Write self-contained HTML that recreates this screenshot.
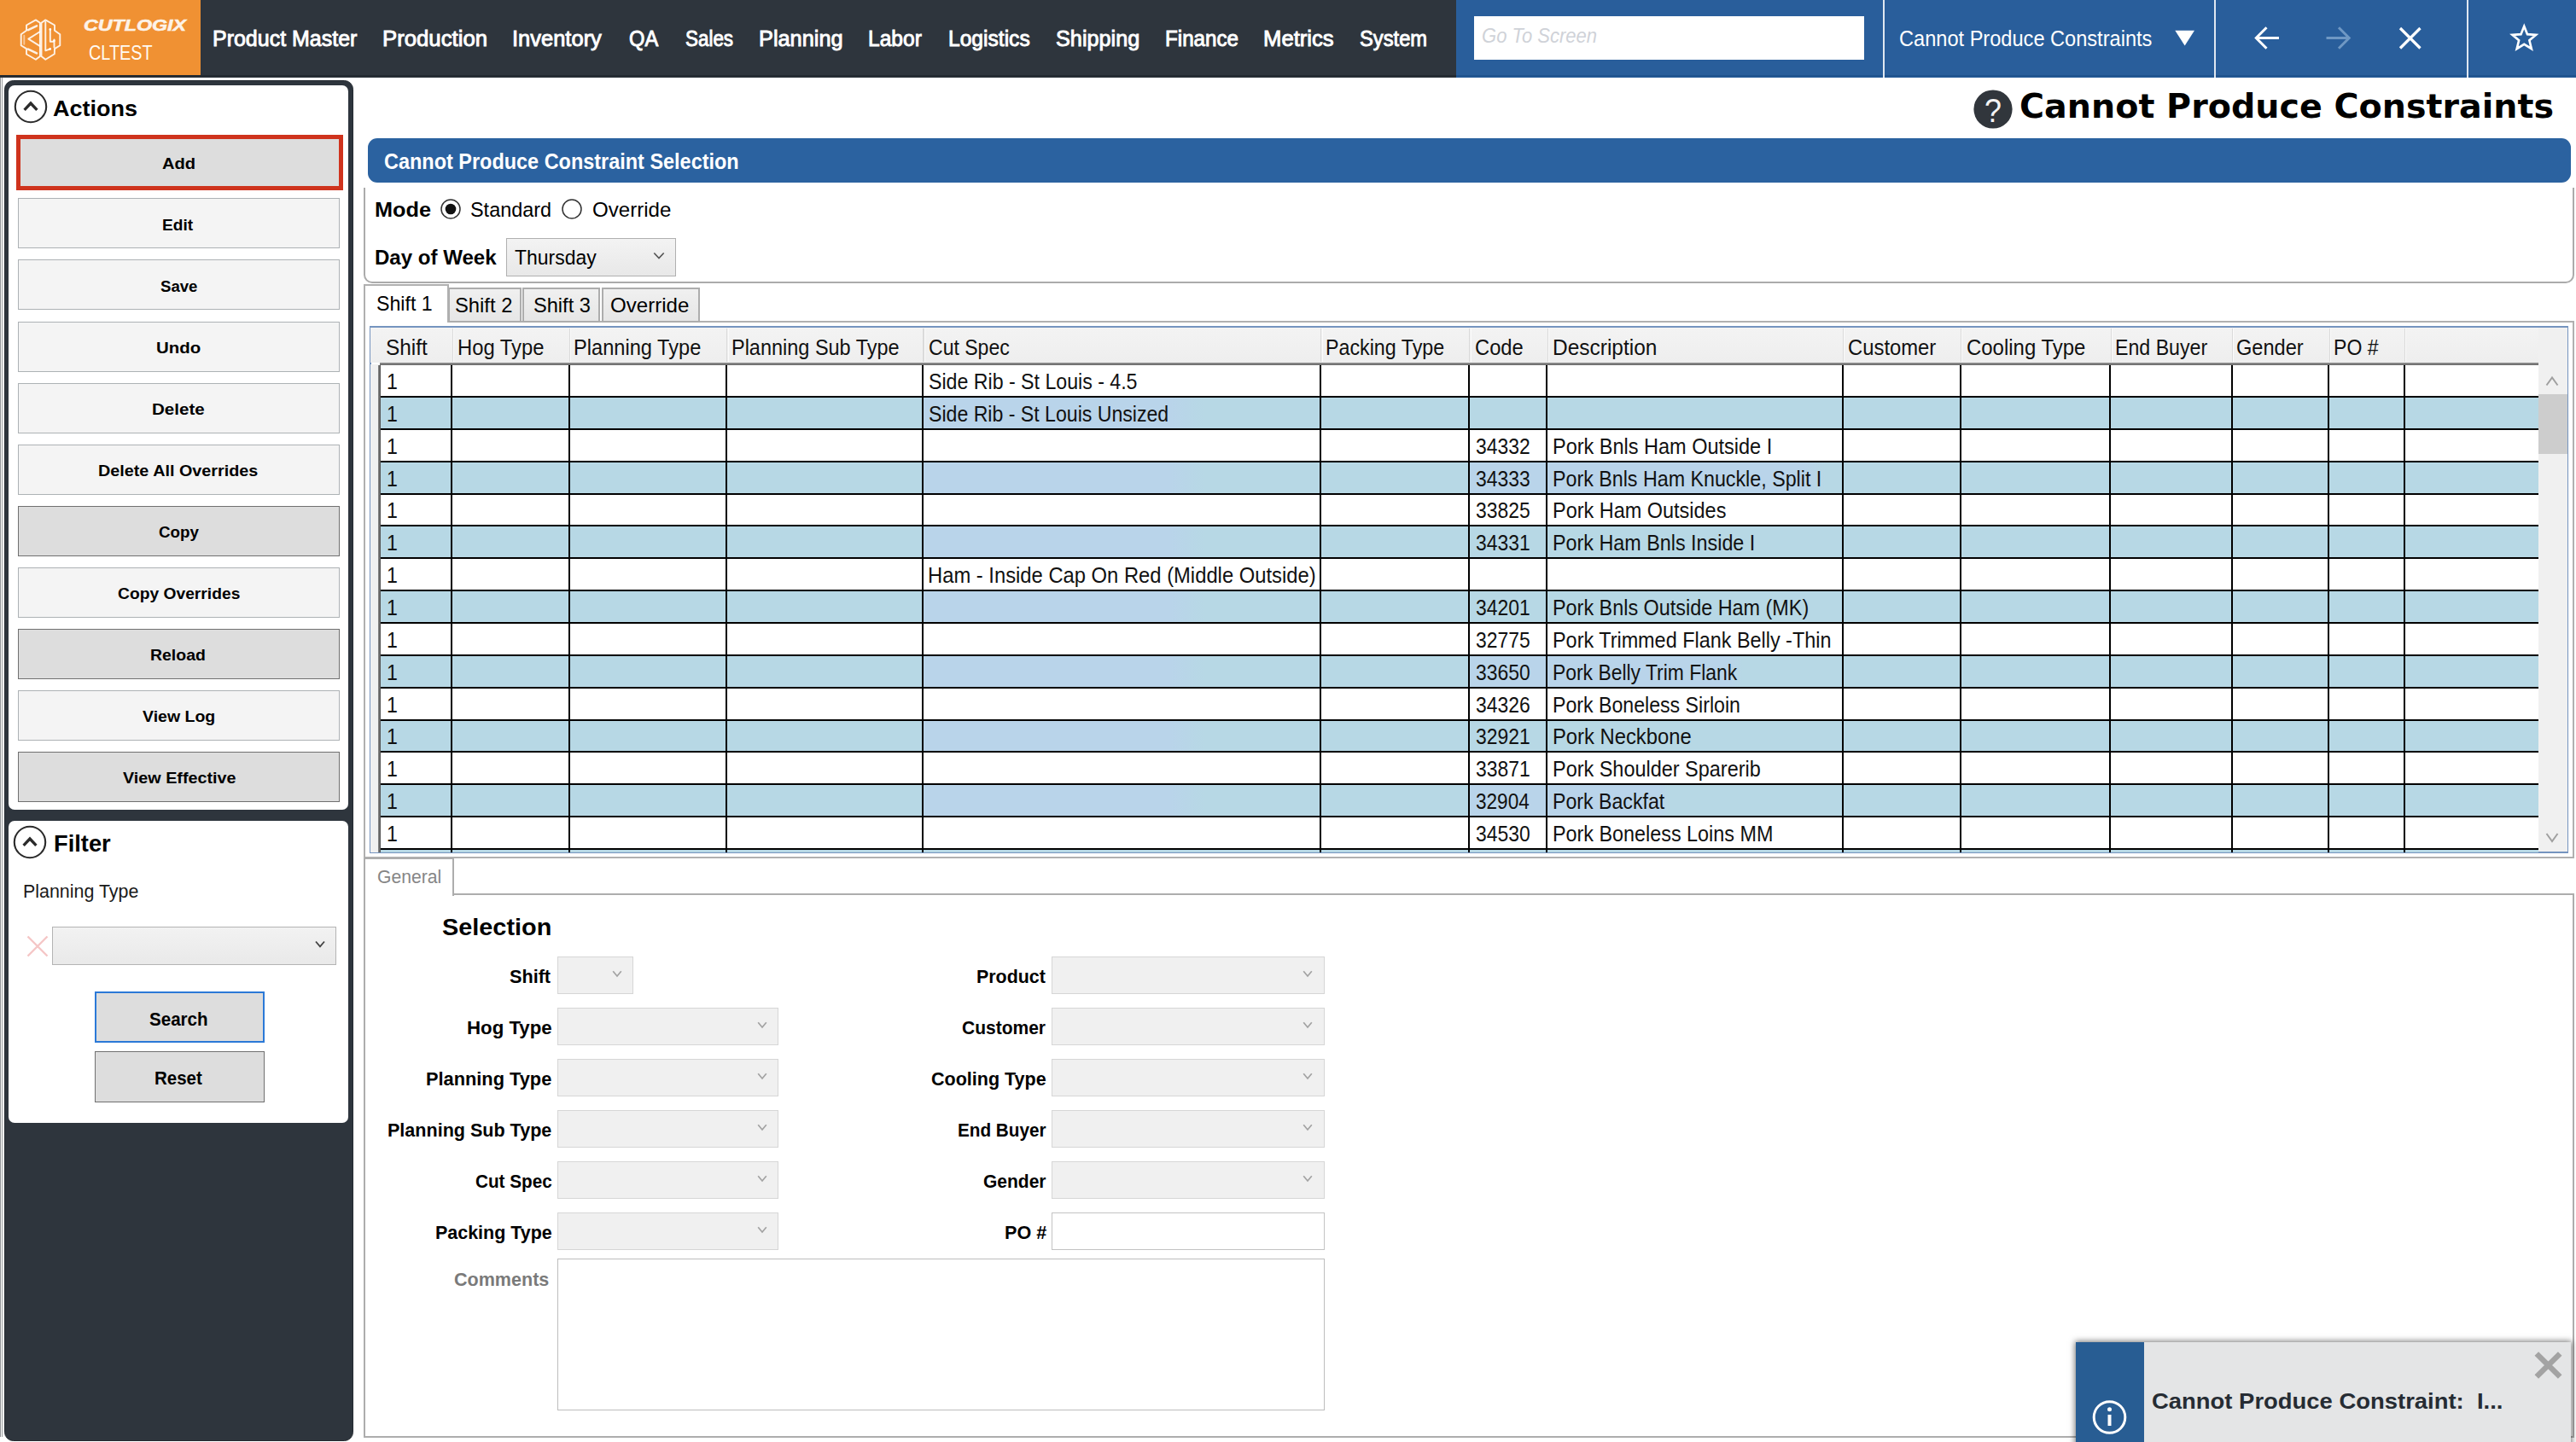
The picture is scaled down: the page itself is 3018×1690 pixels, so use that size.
<!DOCTYPE html>
<html lang="en"><head><meta charset="utf-8"><title>Cannot Produce Constraints</title>
<style>
html,body{margin:0;padding:0;background:#fff;width:3018px;height:1690px;overflow:hidden}
.app{left:0;top:0;width:3018px;height:1690px;overflow:hidden;background:#fff}
body{width:3018px;height:1690px;position:relative;overflow:hidden;font-family:'Liberation Sans',sans-serif}
div,.a,header,aside,main,section,footer{position:absolute;margin:0;padding:0}
header,aside,main,section,footer{left:0;top:0}
.t{position:absolute;white-space:nowrap;transform-origin:0 0;display:block}
</style></head>
<body>
<div class="app">
<header>
<div style="left:0px;top:0px;width:3018px;height:90.5px;background:#2e353d"></div>
<div style="left:0px;top:0px;width:234.8px;height:88.3px;background:#f09133"></div>
<div style="left:1706px;top:0px;width:1312px;height:90.5px;background:#295e9b"></div>
<div style="left:0px;top:88.2px;width:1706px;height:2.3px;background:#222930"></div>
<div style="left:1706px;top:88.2px;width:1312px;height:2.3px;background:#1f538e"></div>
<div style="left:2205.5px;top:0px;width:2px;height:90.5px;background:#dfe7f1"></div>
<div style="left:2594px;top:0px;width:2px;height:90.5px;background:#dfe7f1"></div>
<div style="left:2889.7px;top:0px;width:2px;height:90.5px;background:#dfe7f1"></div>
<svg class="a" style="left:0;top:0" width="100" height="88" viewBox="0 0 100 88" fill="none" stroke="#fff" stroke-opacity=".88" stroke-width="1.900" stroke-linejoin="round" stroke-linecap="round">
<path d="M46.900 26.800 L41.900 23.400 L31 29.500 L31 35.800 L24.700 40.200 L24.700 53.300 L31 57.100 L31 63.500 L41.900 69.800 L46.900 65.900 Z"/>
<path d="M48.500 26.800 L53.300 23.400 L64 29.500 L64 35.800 L70.300 40.200 L70.300 53.300 L64 57.100 L63.800 63.200 L53.300 69.800 L48.500 65.900 Z"/>
<path d="M43 30.400 L33 35.200" stroke-width="2.600"/>
<path d="M33 57.600 L43 62.400" stroke-width="2.600"/>
<path d="M46.600 37.300 L33.300 45.600 L46.600 53.900" stroke-width="1.900"/>
<path d="M28.300 41.800 L28.300 51.800" stroke-opacity=".5"/>
<path d="M53.300 25.800 V59.300 L58.500 57.500" stroke-width="1.900"/>
<path d="M58.800 34.600 V48.700 H63.200 M63.500 46.500 V55.500"/>
<circle cx="58.800" cy="34.400" r="1.300" fill="#fff" stroke="none"/><circle cx="58.700" cy="57.400" r="1.300" fill="#fff" stroke="none"/><circle cx="63.400" cy="47.800" r="1.300" fill="#fff" stroke="none"/>
</svg>
<span class="t" style="left:98.40px;top:20px;font:italic 700 17.7px/20px 'Liberation Sans',sans-serif;color:#fdf3e8;transform:scaleX(1.3134);-webkit-text-stroke:.55px #fdf3e8;">CUTLOGIX</span>
<span class="t" style="left:104.20px;top:48px;font:400 24.7px/27px 'Liberation Sans',sans-serif;color:#fffaf2;transform:scaleX(0.8045);">CLTEST</span>
<span class="t" style="left:248.51px;top:31px;font:400 25.1px/28px 'Liberation Sans',sans-serif;color:#fff;transform:scaleX(0.9953);-webkit-text-stroke:.9px #fff;">Product Master</span>
<span class="t" style="left:447.65px;top:31px;font:400 25.1px/28px 'Liberation Sans',sans-serif;color:#fff;transform:scaleX(1.0255);-webkit-text-stroke:.9px #fff;">Production</span>
<span class="t" style="left:600.47px;top:31px;font:400 25.1px/28px 'Liberation Sans',sans-serif;color:#fff;transform:scaleX(1.0160);-webkit-text-stroke:.9px #fff;">Inventory</span>
<span class="t" style="left:737.26px;top:31px;font:400 25.1px/28px 'Liberation Sans',sans-serif;color:#fff;transform:scaleX(0.9432);-webkit-text-stroke:.9px #fff;">QA</span>
<span class="t" style="left:803.11px;top:31px;font:400 25.1px/28px 'Liberation Sans',sans-serif;color:#fff;transform:scaleX(0.8934);-webkit-text-stroke:.9px #fff;">Sales</span>
<span class="t" style="left:888.98px;top:31px;font:400 25.1px/28px 'Liberation Sans',sans-serif;color:#fff;transform:scaleX(1.0094);-webkit-text-stroke:.9px #fff;">Planning</span>
<span class="t" style="left:1017.34px;top:31px;font:400 25.1px/28px 'Liberation Sans',sans-serif;color:#fff;transform:scaleX(0.9786);-webkit-text-stroke:.9px #fff;">Labor</span>
<span class="t" style="left:1111.04px;top:31px;font:400 25.1px/28px 'Liberation Sans',sans-serif;color:#fff;transform:scaleX(0.9802);-webkit-text-stroke:.9px #fff;">Logistics</span>
<span class="t" style="left:1237.19px;top:31px;font:400 25.1px/28px 'Liberation Sans',sans-serif;color:#fff;transform:scaleX(1.0062);-webkit-text-stroke:.9px #fff;">Shipping</span>
<span class="t" style="left:1365.47px;top:31px;font:400 25.1px/28px 'Liberation Sans',sans-serif;color:#fff;transform:scaleX(0.9639);-webkit-text-stroke:.9px #fff;">Finance</span>
<span class="t" style="left:1480.25px;top:31px;font:400 25.1px/28px 'Liberation Sans',sans-serif;color:#fff;transform:scaleX(1.0229);-webkit-text-stroke:.9px #fff;">Metrics</span>
<span class="t" style="left:1593.45px;top:31px;font:400 25.1px/28px 'Liberation Sans',sans-serif;color:#fff;transform:scaleX(0.9455);-webkit-text-stroke:.9px #fff;">System</span>
<div style="left:1726.7px;top:18.9px;width:457.8px;height:51.3px;background:#fff"></div>
<span class="t" style="left:1736.41px;top:28px;font:italic 400 24.7px/27px 'Liberation Sans',sans-serif;color:#cfd2d8;transform:scaleX(0.8919);">Go To Screen</span>
<span class="t" style="left:2225.45px;top:31px;font:400 24.9px/28px 'Liberation Sans',sans-serif;color:#fff;transform:scaleX(0.9478);">Cannot Produce Constraints</span>
<svg class="a" style="left:2546px;top:34px" width="28" height="22" viewBox="0 0 28 22"><path d="M2.3 1.8 H25 L13.65 19.6 Z" fill="#fff"/></svg>
<svg class="a" style="left:2636px;top:26px" width="40" height="38" viewBox="0 0 40 38" fill="none" stroke="#fff" stroke-width="3"><path d="M34 18.5 H7.5 M19.5 6.3 L7.3 18.5 L19.5 30.700"/></svg>
<svg class="a" style="left:2720px;top:26px" width="40" height="38" viewBox="0 0 40 38" fill="none" stroke="#6f98c4" stroke-width="3"><path d="M5.5 18.5 H32 M20 6.3 L32.2 18.5 L20 30.700"/></svg>
<svg class="a" style="left:2806px;top:28px" width="36" height="34" viewBox="0 0 36 34" fill="none" stroke="#fff" stroke-width="3.2"><path d="M6 5 L29.500 28.500 M29.500 5 L6 28.500"/></svg>
<svg class="a" style="left:2938.300px;top:26.300px" width="38.500" height="35" viewBox="0 0 44 40" fill="none" stroke="#fff" stroke-width="3" stroke-linejoin="miter"><path d="M22 5.5 L26.300 16.200 L37.8 17 L29 24.400 L31.800 35.600 L22 29.500 L12.200 35.600 L15 24.400 L6.200 17 L17.700 16.200 Z"/></svg>
</header>
<aside>
<div style="left:0px;top:90.5px;width:0.9px;height:1593px;background:#8f9194"></div>
<div style="left:2px;top:90.5px;width:0.9px;height:1593px;background:#9a9da0"></div>
<div style="left:4.7px;top:94.1px;width:409.8px;height:1594.7px;background:#2e353d;border:1.5px solid #252b32;box-sizing:border-box;border-radius:10.500px"></div>
<div style="left:10.3px;top:100.2px;width:398.2px;height:849.3px;background:#fff;border-radius:7px"></div>
<div style="left:10.3px;top:962px;width:398.2px;height:353.8px;background:#fff;border-radius:7px"></div>
<svg class="a" style="left:14.5px;top:104px" width="42" height="42" viewBox="0 0 42 42" fill="none" stroke="#2b2b2b"><circle cx="21" cy="21" r="18.2" stroke-width="2.1"/><path d="M13.6 24.800 L21 17 L28.400 24.800" stroke-width="3.3"/></svg>
<span class="t" style="left:62.20px;top:112px;font:700 26.3px/30px 'Liberation Sans',sans-serif;color:#000;transform:scaleX(1.0271);">Actions</span>
<div style="left:18.9px;top:158.2px;width:383.2px;height:64.6px;background:#cf331d"></div>
<div style="left:24px;top:163px;width:373.2px;height:54.8px;background:#dddddd"></div>
<span class="t" style="left:190.10px;top:181px;font:700 18.8px/21px 'Liberation Sans',sans-serif;color:#000;transform:scaleX(1.0712);">Add</span>
<div style="left:20.6px;top:232.44px;width:377.6px;height:59px;background:#f4f4f4;border:1.6px solid #adb2b5;box-sizing:border-box"></div>
<span class="t" style="left:190.48px;top:253px;font:700 18.8px/21px 'Liberation Sans',sans-serif;color:#000;transform:scaleX(1.0165);">Edit</span>
<div style="left:20.6px;top:304.48px;width:377.6px;height:59px;background:#f4f4f4;border:1.6px solid #adb2b5;box-sizing:border-box"></div>
<span class="t" style="left:188.00px;top:325px;font:700 18.8px/21px 'Liberation Sans',sans-serif;color:#000;transform:scaleX(0.9904);">Save</span>
<div style="left:20.6px;top:376.52px;width:377.6px;height:59px;background:#f4f4f4;border:1.6px solid #adb2b5;box-sizing:border-box"></div>
<span class="t" style="left:182.91px;top:397px;font:700 18.8px/21px 'Liberation Sans',sans-serif;color:#000;transform:scaleX(1.0880);">Undo</span>
<div style="left:20.6px;top:448.56px;width:377.6px;height:59px;background:#f4f4f4;border:1.6px solid #adb2b5;box-sizing:border-box"></div>
<span class="t" style="left:178.30px;top:469px;font:700 18.8px/21px 'Liberation Sans',sans-serif;color:#000;transform:scaleX(1.0960);">Delete</span>
<div style="left:20.6px;top:520.6px;width:377.6px;height:59px;background:#f4f4f4;border:1.6px solid #adb2b5;box-sizing:border-box"></div>
<span class="t" style="left:115.45px;top:541px;font:700 18.8px/21px 'Liberation Sans',sans-serif;color:#000;transform:scaleX(1.0533);">Delete All Overrides</span>
<div style="left:20.6px;top:592.64px;width:377.6px;height:59px;background:#dddddd;border:1.6px solid #707070;box-sizing:border-box"></div>
<span class="t" style="left:185.60px;top:613px;font:700 18.8px/21px 'Liberation Sans',sans-serif;color:#000;transform:scaleX(0.9977);">Copy</span>
<div style="left:20.6px;top:664.68px;width:377.6px;height:59px;background:#f4f4f4;border:1.6px solid #adb2b5;box-sizing:border-box"></div>
<span class="t" style="left:137.90px;top:685px;font:700 18.8px/21px 'Liberation Sans',sans-serif;color:#000;transform:scaleX(1.0249);">Copy Overrides</span>
<div style="left:20.6px;top:736.72px;width:377.6px;height:59px;background:#dddddd;border:1.6px solid #707070;box-sizing:border-box"></div>
<span class="t" style="left:176.46px;top:757px;font:700 18.8px/21px 'Liberation Sans',sans-serif;color:#000;transform:scaleX(1.0353);">Reload</span>
<div style="left:20.6px;top:808.76px;width:377.6px;height:59px;background:#f4f4f4;border:1.6px solid #adb2b5;box-sizing:border-box"></div>
<span class="t" style="left:167.00px;top:829px;font:700 18.8px/21px 'Liberation Sans',sans-serif;color:#000;transform:scaleX(1.0377);">View Log</span>
<div style="left:20.6px;top:880.8px;width:377.6px;height:59px;background:#dddddd;border:1.6px solid #707070;box-sizing:border-box"></div>
<span class="t" style="left:143.70px;top:901px;font:700 18.8px/21px 'Liberation Sans',sans-serif;color:#000;transform:scaleX(1.0516);">View Effective</span>
<svg class="a" style="left:14.3px;top:965.8px" width="42" height="42" viewBox="0 0 42 42" fill="none" stroke="#2b2b2b"><circle cx="21" cy="21" r="18.2" stroke-width="2.1"/><path d="M13.6 24.800 L21 17 L28.400 24.800" stroke-width="3.3"/></svg>
<span class="t" style="left:62.69px;top:974px;font:700 26.9px/30px 'Liberation Sans',sans-serif;color:#000;transform:scaleX(1.0141);">Filter</span>
<span class="t" style="left:26.53px;top:1032px;font:400 22.1px/25px 'Liberation Sans',sans-serif;color:#1a1a1a;transform:scaleX(0.9694);">Planning Type</span>
<svg class="a" style="left:29px;top:1094px" width="30" height="30" viewBox="0 0 30 30" fill="none" stroke="#f5c6c6" stroke-width="2.4"><path d="M3.500 3.500 L26.500 26.500 M26.500 3.500 L3.500 26.500"/></svg>
<div style="left:60.9px;top:1086.3px;width:333.3px;height:45px;background:linear-gradient(#f2f2f2,#e9e9e9);border:1.5px solid #b4b4b4;box-sizing:border-box"></div>
<svg class="a" style="left:368px;top:1101px" width="14" height="12" viewBox="0 0 14 12" fill="none" stroke="#444" stroke-width="1.8"><path d="M2 2.500 L7 8.300 L12 2.500"/></svg>
<div style="left:110.6px;top:1161.9px;width:199.8px;height:59.9px;background:#dddddd;border:2.3px solid #2b79d7;box-sizing:border-box"></div>
<div style="left:110.6px;top:1231.8px;width:199.8px;height:59.9px;background:#dddddd;border:1.6px solid #707070;box-sizing:border-box"></div>
<span class="t" style="left:174.90px;top:1182px;font:700 22.1px/25px 'Liberation Sans',sans-serif;color:#000;transform:scaleX(0.9304);">Search</span>
<span class="t" style="left:180.87px;top:1251px;font:700 22.1px/25px 'Liberation Sans',sans-serif;color:#000;transform:scaleX(0.9278);">Reset</span>
</aside>
<main>
<section>
<svg class="a" style="left:2311.800px;top:105.200px" width="46" height="46" viewBox="0 0 46 46"><circle cx="23" cy="23" r="22.600" fill="#31363c"/></svg>
<span class="t" style="left:2324.68px;top:108px;font:400 39.0px/43px 'Liberation Sans',sans-serif;color:#f4f4f4;transform:scaleX(0.9200);">?</span>
<span class="t" style="left:2366.38px;top:102px;font:700 38.7px/45px 'DejaVu Sans','Liberation Sans',sans-serif;color:#000;transform:scaleX(1.0237);">Cannot Produce Constraints</span>
<div style="left:430.5px;top:162.2px;width:2581px;height:52px;background:#2b62a0;border-radius:11px"></div>
<span class="t" style="left:449.77px;top:175px;font:700 25.1px/28px 'Liberation Sans',sans-serif;color:#fff;transform:scaleX(0.9346);">Cannot Produce Constraint Selection</span>
<div style="left:426.4px;top:214px;width:2589.4px;height:118px;border:2px solid #ababab;border-top:none;border-radius:0 0 10px 10px;box-sizing:border-box"></div>
<div style="left:420px;top:214px;width:2600px;height:6px;background:#fff"></div>
<span class="t" style="left:438.57px;top:232px;font:700 24.5px/27px 'Liberation Sans',sans-serif;color:#000;transform:scaleX(1.0314);">Mode</span>
<svg class="a" style="left:515.4px;top:231.6px" width="26" height="26" viewBox="0 0 26 26"><circle cx="13" cy="13" r="11" fill="#fff" stroke="#333" stroke-width="1.5"/><circle cx="13" cy="13" r="6.300" fill="#111"/></svg>
<span class="t" style="left:551.34px;top:232px;font:400 24.5px/27px 'Liberation Sans',sans-serif;color:#000;transform:scaleX(0.9559);">Standard</span>
<svg class="a" style="left:657.2px;top:231.6px" width="26" height="26" viewBox="0 0 26 26"><circle cx="13" cy="13" r="11" fill="#fff" stroke="#333" stroke-width="1.5"/></svg>
<span class="t" style="left:693.82px;top:232px;font:400 24.5px/27px 'Liberation Sans',sans-serif;color:#000;transform:scaleX(0.9825);">Override</span>
<span class="t" style="left:438.62px;top:288px;font:700 24.5px/27px 'Liberation Sans',sans-serif;color:#000;transform:scaleX(0.9819);">Day of Week</span>
<div style="left:592.7px;top:278.7px;width:199.2px;height:45.1px;background:linear-gradient(#f3f3f3,#e8e8e8);border:1.5px solid #b0b0b0;box-sizing:border-box"></div>
<span class="t" style="left:602.80px;top:288px;font:400 24.5px/27px 'Liberation Sans',sans-serif;color:#000;transform:scaleX(0.9370);">Thursday</span>
<svg class="a" style="left:764px;top:294px" width="16" height="12" viewBox="0 0 16 12" fill="none" stroke="#555" stroke-width="1.700"><path d="M2.300 2.500 L8 8.500 L13.700 2.500"/></svg>
</section>
<section>
<div style="left:426.4px;top:376px;width:2589.4px;height:630px;border:2px solid #b0b0b0;box-sizing:border-box"></div>
<div style="left:524.8px;top:336.8px;width:86.2px;height:41px;background:linear-gradient(#f0f0f0,#e6e6e6);border:2px solid #adadad;box-sizing:border-box"></div>
<span class="t" style="left:533.23px;top:344px;font:400 24.5px/27px 'Liberation Sans',sans-serif;color:#000;transform:scaleX(0.9701);">Shift 2</span>
<div style="left:612.2px;top:336.8px;width:90.6px;height:41px;background:linear-gradient(#f0f0f0,#e6e6e6);border:2px solid #adadad;box-sizing:border-box"></div>
<span class="t" style="left:624.54px;top:344px;font:400 24.5px/27px 'Liberation Sans',sans-serif;color:#000;transform:scaleX(0.9627);">Shift 3</span>
<div style="left:704.6px;top:336.8px;width:115.2px;height:41px;background:linear-gradient(#f0f0f0,#e6e6e6);border:2px solid #adadad;box-sizing:border-box"></div>
<span class="t" style="left:715.02px;top:344px;font:400 24.5px/27px 'Liberation Sans',sans-serif;color:#000;transform:scaleX(0.9835);">Override</span>
<div style="left:426.4px;top:332.8px;width:99.4px;height:45.6px;background:#fff;border:2px solid #b0b0b0;border-bottom:none;box-sizing:border-box"></div>
<span class="t" style="left:441.46px;top:342px;font:400 24.5px/27px 'Liberation Sans',sans-serif;color:#000;transform:scaleX(0.9450);">Shift 1</span>
<div style="left:432.5px;top:382.4px;width:2576.7px;height:617.2px;border:2px solid #7594bf;box-sizing:border-box;background:#fff"></div>
<div style="left:434.2px;top:384.2px;width:2539.5px;height:40.8px;background:linear-gradient(#f3f3f3,#eeeeee)"></div>
<div style="left:445px;top:424.6px;width:2528.6px;height:3.5px;background:linear-gradient(#999,#767676 60%,#6a6a6a)"></div>
<div style="left:2973.7px;top:384.2px;width:34.3px;height:614px;background:#f0f0f0"></div>
<div style="left:2973.7px;top:462.4px;width:34.3px;height:69.6px;background:#cdcdcd"></div>
<svg class="a" style="left:2979.400px;top:436.500px" width="22" height="20" viewBox="0 0 22 20" fill="none" stroke="#a0a0a0" stroke-width="2"><path d="M4.500 14.500 L11 5.500 L17.500 14.500"/></svg>
<svg class="a" style="left:2979.400px;top:972.300px" width="22" height="20" viewBox="0 0 22 20" fill="none" stroke="#a0a0a0" stroke-width="2"><path d="M4.500 5 L11 14 L17.500 5"/></svg>
<div style="left:434.2px;top:427px;width:9px;height:571.6px;background:#f0f0f0"></div>
<span class="t" style="left:451.73px;top:393px;font:400 25.1px/28px 'Liberation Sans',sans-serif;color:#111;transform:scaleX(0.9708);">Shift</span>
<span class="t" style="left:535.80px;top:393px;font:400 25.1px/28px 'Liberation Sans',sans-serif;color:#111;transform:scaleX(0.9478);">Hog Type</span>
<span class="t" style="left:672.12px;top:393px;font:400 25.1px/28px 'Liberation Sans',sans-serif;color:#111;transform:scaleX(0.9412);">Planning Type</span>
<span class="t" style="left:856.53px;top:393px;font:400 25.1px/28px 'Liberation Sans',sans-serif;color:#111;transform:scaleX(0.9355);">Planning Sub Type</span>
<span class="t" style="left:1088.08px;top:393px;font:400 25.1px/28px 'Liberation Sans',sans-serif;color:#111;transform:scaleX(0.9177);">Cut Spec</span>
<span class="t" style="left:1553.15px;top:393px;font:400 25.1px/28px 'Liberation Sans',sans-serif;color:#111;transform:scaleX(0.9263);">Packing Type</span>
<span class="t" style="left:1727.55px;top:393px;font:400 25.1px/28px 'Liberation Sans',sans-serif;color:#111;transform:scaleX(0.9460);">Code</span>
<span class="t" style="left:1819.05px;top:393px;font:400 25.1px/28px 'Liberation Sans',sans-serif;color:#111;transform:scaleX(0.9750);">Description</span>
<span class="t" style="left:2165.05px;top:393px;font:400 25.1px/28px 'Liberation Sans',sans-serif;color:#111;transform:scaleX(0.9496);">Customer</span>
<span class="t" style="left:2303.65px;top:393px;font:400 25.1px/28px 'Liberation Sans',sans-serif;color:#111;transform:scaleX(0.9542);">Cooling Type</span>
<span class="t" style="left:2477.85px;top:393px;font:400 25.1px/28px 'Liberation Sans',sans-serif;color:#111;transform:scaleX(0.9232);">End Buyer</span>
<span class="t" style="left:2620.06px;top:393px;font:400 25.1px/28px 'Liberation Sans',sans-serif;color:#111;transform:scaleX(0.9400);">Gender</span>
<span class="t" style="left:2734.16px;top:393px;font:400 25.1px/28px 'Liberation Sans',sans-serif;color:#111;transform:scaleX(0.9198);">PO #</span>
<div style="left:530.7px;top:385.2px;width:1.2px;height:38.8px;background:#fbfbfb"></div>
<div style="left:529.5px;top:385.2px;width:1.2px;height:38.8px;background:#dadada"></div>
<div style="left:668.2px;top:385.2px;width:1.2px;height:38.8px;background:#fbfbfb"></div>
<div style="left:667px;top:385.2px;width:1.2px;height:38.8px;background:#dadada"></div>
<div style="left:852.5px;top:385.2px;width:1.2px;height:38.8px;background:#fbfbfb"></div>
<div style="left:851.3px;top:385.2px;width:1.2px;height:38.8px;background:#dadada"></div>
<div style="left:1082.6px;top:385.2px;width:1.2px;height:38.8px;background:#fbfbfb"></div>
<div style="left:1081.4px;top:385.2px;width:1.2px;height:38.8px;background:#dadada"></div>
<div style="left:1548.5px;top:385.2px;width:1.2px;height:38.8px;background:#fbfbfb"></div>
<div style="left:1547.3px;top:385.2px;width:1.2px;height:38.8px;background:#dadada"></div>
<div style="left:1722.5px;top:385.2px;width:1.2px;height:38.8px;background:#fbfbfb"></div>
<div style="left:1721.3px;top:385.2px;width:1.2px;height:38.8px;background:#dadada"></div>
<div style="left:1813.7px;top:385.2px;width:1.2px;height:38.8px;background:#fbfbfb"></div>
<div style="left:1812.5px;top:385.2px;width:1.2px;height:38.8px;background:#dadada"></div>
<div style="left:2160.1px;top:385.2px;width:1.2px;height:38.8px;background:#fbfbfb"></div>
<div style="left:2158.9px;top:385.2px;width:1.2px;height:38.8px;background:#dadada"></div>
<div style="left:2297.9px;top:385.2px;width:1.2px;height:38.8px;background:#fbfbfb"></div>
<div style="left:2296.7px;top:385.2px;width:1.2px;height:38.8px;background:#dadada"></div>
<div style="left:2473.7px;top:385.2px;width:1.2px;height:38.8px;background:#fbfbfb"></div>
<div style="left:2472.5px;top:385.2px;width:1.2px;height:38.8px;background:#dadada"></div>
<div style="left:2616.1px;top:385.2px;width:1.2px;height:38.8px;background:#fbfbfb"></div>
<div style="left:2614.9px;top:385.2px;width:1.2px;height:38.8px;background:#dadada"></div>
<div style="left:2729.7px;top:385.2px;width:1.2px;height:38.8px;background:#fbfbfb"></div>
<div style="left:2728.5px;top:385.2px;width:1.2px;height:38.8px;background:#dadada"></div>
<div style="left:2818px;top:385.2px;width:1.2px;height:38.8px;background:#fbfbfb"></div>
<div style="left:2816.8px;top:385.2px;width:1.2px;height:38.8px;background:#dadada"></div>
<span class="t" style="left:452.98px;top:433px;font:400 25.1px/28px 'Liberation Sans',sans-serif;color:#111;transform:scaleX(0.9200);">1</span>
<span class="t" style="left:1088.08px;top:433px;font:400 25.1px/28px 'Liberation Sans',sans-serif;color:#111;transform:scaleX(0.9226);">Side Rib - St Louis - 4.5</span>
<div style="left:445.6px;top:466px;width:2528.1px;height:36px;background:#b7d8e5"></div>
<div style="left:1081.3px;top:466px;width:330px;height:36px;background:linear-gradient(90deg,#b9d4ea 0,#b9d4ea 88%,#b7d8e5 100%)"></div>
<span class="t" style="left:452.98px;top:471px;font:400 25.1px/28px 'Liberation Sans',sans-serif;color:#111;transform:scaleX(0.9200);">1</span>
<span class="t" style="left:1088.08px;top:471px;font:400 25.1px/28px 'Liberation Sans',sans-serif;color:#111;transform:scaleX(0.9206);">Side Rib - St Louis Unsized</span>
<span class="t" style="left:452.98px;top:509px;font:400 25.1px/28px 'Liberation Sans',sans-serif;color:#111;transform:scaleX(0.9200);">1</span>
<span class="t" style="left:1729.30px;top:509px;font:400 25.1px/28px 'Liberation Sans',sans-serif;color:#111;transform:scaleX(0.9125);">34332</span>
<span class="t" style="left:1819.13px;top:509px;font:400 25.1px/28px 'Liberation Sans',sans-serif;color:#111;transform:scaleX(0.9363);">Pork Bnls Ham Outside I</span>
<div style="left:445.6px;top:542px;width:2528.1px;height:36px;background:#b7d8e5"></div>
<div style="left:1081.3px;top:542px;width:330px;height:36px;background:linear-gradient(90deg,#b9d4ea 0,#b9d4ea 88%,#b7d8e5 100%)"></div>
<div style="left:1721.2px;top:542px;width:417.4px;height:36px;background:linear-gradient(90deg,#b9d4ea 0,#b9d4ea 94%,#b7d8e5 100%)"></div>
<span class="t" style="left:452.98px;top:547px;font:400 25.1px/28px 'Liberation Sans',sans-serif;color:#111;transform:scaleX(0.9200);">1</span>
<span class="t" style="left:1729.30px;top:547px;font:400 25.1px/28px 'Liberation Sans',sans-serif;color:#111;transform:scaleX(0.9125);">34333</span>
<span class="t" style="left:1819.15px;top:547px;font:400 25.1px/28px 'Liberation Sans',sans-serif;color:#111;transform:scaleX(0.9265);">Pork Bnls Ham Knuckle, Split I</span>
<span class="t" style="left:452.98px;top:584px;font:400 25.1px/28px 'Liberation Sans',sans-serif;color:#111;transform:scaleX(0.9200);">1</span>
<span class="t" style="left:1729.30px;top:584px;font:400 25.1px/28px 'Liberation Sans',sans-serif;color:#111;transform:scaleX(0.9125);">33825</span>
<span class="t" style="left:1819.13px;top:584px;font:400 25.1px/28px 'Liberation Sans',sans-serif;color:#111;transform:scaleX(0.9349);">Pork Ham Outsides</span>
<div style="left:445.6px;top:617px;width:2528.1px;height:36px;background:#b7d8e5"></div>
<div style="left:1081.3px;top:617px;width:330px;height:36px;background:linear-gradient(90deg,#b9d4ea 0,#b9d4ea 88%,#b7d8e5 100%)"></div>
<span class="t" style="left:452.98px;top:622px;font:400 25.1px/28px 'Liberation Sans',sans-serif;color:#111;transform:scaleX(0.9200);">1</span>
<span class="t" style="left:1729.30px;top:622px;font:400 25.1px/28px 'Liberation Sans',sans-serif;color:#111;transform:scaleX(0.9125);">34331</span>
<span class="t" style="left:1819.14px;top:622px;font:400 25.1px/28px 'Liberation Sans',sans-serif;color:#111;transform:scaleX(0.9298);">Pork Ham Bnls Inside I</span>
<span class="t" style="left:452.98px;top:660px;font:400 25.1px/28px 'Liberation Sans',sans-serif;color:#111;transform:scaleX(0.9200);">1</span>
<span class="t" style="left:1087.10px;top:660px;font:400 25.1px/28px 'Liberation Sans',sans-serif;color:#111;transform:scaleX(0.9475);">Ham - Inside Cap On Red (Middle Outside)</span>
<div style="left:445.6px;top:693px;width:2528.1px;height:36px;background:#b7d8e5"></div>
<div style="left:1081.3px;top:693px;width:330px;height:36px;background:linear-gradient(90deg,#b9d4ea 0,#b9d4ea 88%,#b7d8e5 100%)"></div>
<span class="t" style="left:452.98px;top:698px;font:400 25.1px/28px 'Liberation Sans',sans-serif;color:#111;transform:scaleX(0.9200);">1</span>
<span class="t" style="left:1729.30px;top:698px;font:400 25.1px/28px 'Liberation Sans',sans-serif;color:#111;transform:scaleX(0.9125);">34201</span>
<span class="t" style="left:1819.14px;top:698px;font:400 25.1px/28px 'Liberation Sans',sans-serif;color:#111;transform:scaleX(0.9321);">Pork Bnls Outside Ham (MK)</span>
<span class="t" style="left:452.98px;top:736px;font:400 25.1px/28px 'Liberation Sans',sans-serif;color:#111;transform:scaleX(0.9200);">1</span>
<span class="t" style="left:1729.30px;top:736px;font:400 25.1px/28px 'Liberation Sans',sans-serif;color:#111;transform:scaleX(0.9125);">32775</span>
<span class="t" style="left:1819.13px;top:736px;font:400 25.1px/28px 'Liberation Sans',sans-serif;color:#111;transform:scaleX(0.9327);">Pork Trimmed Flank Belly -Thin</span>
<div style="left:445.6px;top:769px;width:2528.1px;height:36px;background:#b7d8e5"></div>
<div style="left:1081.3px;top:769px;width:330px;height:36px;background:linear-gradient(90deg,#b9d4ea 0,#b9d4ea 88%,#b7d8e5 100%)"></div>
<div style="left:1721.2px;top:769px;width:321px;height:36px;background:linear-gradient(90deg,#b9d4ea 0,#b9d4ea 94%,#b7d8e5 100%)"></div>
<span class="t" style="left:452.98px;top:774px;font:400 25.1px/28px 'Liberation Sans',sans-serif;color:#111;transform:scaleX(0.9200);">1</span>
<span class="t" style="left:1729.30px;top:774px;font:400 25.1px/28px 'Liberation Sans',sans-serif;color:#111;transform:scaleX(0.9125);">33650</span>
<span class="t" style="left:1819.18px;top:774px;font:400 25.1px/28px 'Liberation Sans',sans-serif;color:#111;transform:scaleX(0.9121);">Pork Belly Trim Flank</span>
<span class="t" style="left:452.98px;top:812px;font:400 25.1px/28px 'Liberation Sans',sans-serif;color:#111;transform:scaleX(0.9200);">1</span>
<span class="t" style="left:1729.30px;top:812px;font:400 25.1px/28px 'Liberation Sans',sans-serif;color:#111;transform:scaleX(0.9125);">34326</span>
<span class="t" style="left:1819.16px;top:812px;font:400 25.1px/28px 'Liberation Sans',sans-serif;color:#111;transform:scaleX(0.9221);">Pork Boneless Sirloin</span>
<div style="left:445.6px;top:845px;width:2528.1px;height:35px;background:#b7d8e5"></div>
<div style="left:1081.3px;top:845px;width:330px;height:35px;background:linear-gradient(90deg,#b9d4ea 0,#b9d4ea 88%,#b7d8e5 100%)"></div>
<span class="t" style="left:452.98px;top:849px;font:400 25.1px/28px 'Liberation Sans',sans-serif;color:#111;transform:scaleX(0.9200);">1</span>
<span class="t" style="left:1729.30px;top:849px;font:400 25.1px/28px 'Liberation Sans',sans-serif;color:#111;transform:scaleX(0.9125);">32921</span>
<span class="t" style="left:1819.10px;top:849px;font:400 25.1px/28px 'Liberation Sans',sans-serif;color:#111;transform:scaleX(0.9478);">Pork Neckbone</span>
<span class="t" style="left:452.98px;top:887px;font:400 25.1px/28px 'Liberation Sans',sans-serif;color:#111;transform:scaleX(0.9200);">1</span>
<span class="t" style="left:1729.30px;top:887px;font:400 25.1px/28px 'Liberation Sans',sans-serif;color:#111;transform:scaleX(0.9125);">33871</span>
<span class="t" style="left:1819.13px;top:887px;font:400 25.1px/28px 'Liberation Sans',sans-serif;color:#111;transform:scaleX(0.9345);">Pork Shoulder Sparerib</span>
<div style="left:445.6px;top:920px;width:2528.1px;height:36px;background:#b7d8e5"></div>
<div style="left:1081.3px;top:920px;width:330px;height:36px;background:linear-gradient(90deg,#b9d4ea 0,#b9d4ea 88%,#b7d8e5 100%)"></div>
<div style="left:1721.2px;top:920px;width:235.2px;height:36px;background:linear-gradient(90deg,#b9d4ea 0,#b9d4ea 94%,#b7d8e5 100%)"></div>
<span class="t" style="left:452.98px;top:925px;font:400 25.1px/28px 'Liberation Sans',sans-serif;color:#111;transform:scaleX(0.9200);">1</span>
<span class="t" style="left:1729.30px;top:925px;font:400 25.1px/28px 'Liberation Sans',sans-serif;color:#111;transform:scaleX(0.8994);">32904</span>
<span class="t" style="left:1819.16px;top:925px;font:400 25.1px/28px 'Liberation Sans',sans-serif;color:#111;transform:scaleX(0.9224);">Pork Backfat</span>
<span class="t" style="left:452.98px;top:963px;font:400 25.1px/28px 'Liberation Sans',sans-serif;color:#111;transform:scaleX(0.9200);">1</span>
<span class="t" style="left:1729.30px;top:963px;font:400 25.1px/28px 'Liberation Sans',sans-serif;color:#111;transform:scaleX(0.9125);">34530</span>
<span class="t" style="left:1819.14px;top:963px;font:400 25.1px/28px 'Liberation Sans',sans-serif;color:#111;transform:scaleX(0.9308);">Pork Boneless Loins MM</span>
<div style="left:445.6px;top:996px;width:2528.1px;height:2.6px;background:#b7d8e5"></div>
<div style="left:445.6px;top:464px;width:2528.1px;height:2px;background:#000"></div>
<div style="left:445.6px;top:502px;width:2528.1px;height:2px;background:#000"></div>
<div style="left:445.6px;top:540px;width:2528.1px;height:2px;background:#000"></div>
<div style="left:445.6px;top:578px;width:2528.1px;height:2px;background:#000"></div>
<div style="left:445.6px;top:615px;width:2528.1px;height:2px;background:#000"></div>
<div style="left:445.6px;top:653px;width:2528.1px;height:2px;background:#000"></div>
<div style="left:445.6px;top:691px;width:2528.1px;height:2px;background:#000"></div>
<div style="left:445.6px;top:729px;width:2528.1px;height:2px;background:#000"></div>
<div style="left:445.6px;top:767px;width:2528.1px;height:2px;background:#000"></div>
<div style="left:445.6px;top:805px;width:2528.1px;height:2px;background:#000"></div>
<div style="left:445.6px;top:843px;width:2528.1px;height:2px;background:#000"></div>
<div style="left:445.6px;top:880px;width:2528.1px;height:2px;background:#000"></div>
<div style="left:445.6px;top:918px;width:2528.1px;height:2px;background:#000"></div>
<div style="left:445.6px;top:956px;width:2528.1px;height:2px;background:#000"></div>
<div style="left:445.6px;top:994px;width:2528.1px;height:2px;background:#000"></div>
<div style="left:528.35px;top:427.5px;width:2.1px;height:571px;background:#000"></div>
<div style="left:665.85px;top:427.5px;width:2.1px;height:571px;background:#000"></div>
<div style="left:850.15px;top:427.5px;width:2.1px;height:571px;background:#000"></div>
<div style="left:1080.25px;top:427.5px;width:2.1px;height:571px;background:#000"></div>
<div style="left:1546.15px;top:427.5px;width:2.1px;height:571px;background:#000"></div>
<div style="left:1720.15px;top:427.5px;width:2.1px;height:571px;background:#000"></div>
<div style="left:1811.35px;top:427.5px;width:2.1px;height:571px;background:#000"></div>
<div style="left:2157.75px;top:427.5px;width:2.1px;height:571px;background:#000"></div>
<div style="left:2295.55px;top:427.5px;width:2.1px;height:571px;background:#000"></div>
<div style="left:2471.35px;top:427.5px;width:2.1px;height:571px;background:#000"></div>
<div style="left:2613.75px;top:427.5px;width:2.1px;height:571px;background:#000"></div>
<div style="left:2727.35px;top:427.5px;width:2.1px;height:571px;background:#000"></div>
<div style="left:2815.65px;top:427.5px;width:2.1px;height:571px;background:#000"></div>
<div style="left:442.8px;top:428px;width:3px;height:570.6px;background:linear-gradient(90deg,#8a8a8a,#4d4d4d)"></div>
</section>
<section>
<div style="left:426.4px;top:1047.4px;width:2589.4px;height:638px;border:2px solid #adadad;box-sizing:border-box"></div>
<div style="left:426.4px;top:1005px;width:105.6px;height:45px;background:#fff;border:2px solid #adadad;border-bottom:none;box-sizing:border-box"></div>
<span class="t" style="left:442.04px;top:1015px;font:400 22.1px/25px 'Liberation Sans',sans-serif;color:#868686;transform:scaleX(0.9558);">General</span>
<span class="t" style="left:518.00px;top:1070px;font:700 28.3px/32px 'Liberation Sans',sans-serif;color:#000;transform:scaleX(1.0199);">Selection</span>
<div style="left:652.7px;top:1120.5px;width:89.4px;height:44.6px;background:#f0f0f0;border:1.6px solid #d6d6d6;box-sizing:border-box"></div>
<svg class="a" style="left:715.6px;top:1136px" width="14" height="12" viewBox="0 0 14 12" fill="none" stroke="#a2a2a2" stroke-width="1.700"><path d="M2.200 2.300 L7 8 L11.800 2.300"/></svg>
<span class="t" style="left:597.30px;top:1132px;font:700 22.1px/25px 'Liberation Sans',sans-serif;color:#000;transform:scaleX(0.9793);">Shift</span>
<div style="left:652.7px;top:1180.6px;width:259.3px;height:44.6px;background:#f0f0f0;border:1.6px solid #d6d6d6;box-sizing:border-box"></div>
<svg class="a" style="left:885.5px;top:1196.1px" width="14" height="12" viewBox="0 0 14 12" fill="none" stroke="#a2a2a2" stroke-width="1.700"><path d="M2.200 2.300 L7 8 L11.800 2.300"/></svg>
<span class="t" style="left:546.59px;top:1192px;font:700 22.1px/25px 'Liberation Sans',sans-serif;color:#000;transform:scaleX(1.0069);">Hog Type</span>
<div style="left:652.7px;top:1240.6px;width:259.3px;height:44.6px;background:#f0f0f0;border:1.6px solid #d6d6d6;box-sizing:border-box"></div>
<svg class="a" style="left:885.5px;top:1256.1px" width="14" height="12" viewBox="0 0 14 12" fill="none" stroke="#a2a2a2" stroke-width="1.700"><path d="M2.200 2.300 L7 8 L11.800 2.300"/></svg>
<span class="t" style="left:499.01px;top:1252px;font:700 22.1px/25px 'Liberation Sans',sans-serif;color:#000;transform:scaleX(0.9861);">Planning Type</span>
<div style="left:652.7px;top:1300.6px;width:259.3px;height:44.6px;background:#f0f0f0;border:1.6px solid #d6d6d6;box-sizing:border-box"></div>
<svg class="a" style="left:885.5px;top:1316.1px" width="14" height="12" viewBox="0 0 14 12" fill="none" stroke="#a2a2a2" stroke-width="1.700"><path d="M2.200 2.300 L7 8 L11.800 2.300"/></svg>
<span class="t" style="left:454.03px;top:1312px;font:700 22.1px/25px 'Liberation Sans',sans-serif;color:#000;transform:scaleX(0.9749);">Planning Sub Type</span>
<div style="left:652.7px;top:1360.5px;width:259.3px;height:44.6px;background:#f0f0f0;border:1.6px solid #d6d6d6;box-sizing:border-box"></div>
<svg class="a" style="left:885.5px;top:1376px" width="14" height="12" viewBox="0 0 14 12" fill="none" stroke="#a2a2a2" stroke-width="1.700"><path d="M2.200 2.300 L7 8 L11.800 2.300"/></svg>
<span class="t" style="left:556.50px;top:1372px;font:700 22.1px/25px 'Liberation Sans',sans-serif;color:#000;transform:scaleX(0.9375);">Cut Spec</span>
<div style="left:652.7px;top:1420.5px;width:259.3px;height:44.6px;background:#f0f0f0;border:1.6px solid #d6d6d6;box-sizing:border-box"></div>
<svg class="a" style="left:885.5px;top:1436px" width="14" height="12" viewBox="0 0 14 12" fill="none" stroke="#a2a2a2" stroke-width="1.700"><path d="M2.200 2.300 L7 8 L11.800 2.300"/></svg>
<span class="t" style="left:509.53px;top:1432px;font:700 22.1px/25px 'Liberation Sans',sans-serif;color:#000;transform:scaleX(0.9713);">Packing Type</span>
<div style="left:1232.3px;top:1120.5px;width:319.3px;height:44.6px;background:#f0f0f0;border:1.6px solid #d6d6d6;box-sizing:border-box"></div>
<svg class="a" style="left:1525.1px;top:1136px" width="14" height="12" viewBox="0 0 14 12" fill="none" stroke="#a2a2a2" stroke-width="1.700"><path d="M2.200 2.300 L7 8 L11.800 2.300"/></svg>
<span class="t" style="left:1144.03px;top:1132px;font:700 22.1px/25px 'Liberation Sans',sans-serif;color:#000;transform:scaleX(0.9674);">Product</span>
<div style="left:1232.3px;top:1180.6px;width:319.3px;height:44.6px;background:#f0f0f0;border:1.6px solid #d6d6d6;box-sizing:border-box"></div>
<svg class="a" style="left:1525.1px;top:1196.1px" width="14" height="12" viewBox="0 0 14 12" fill="none" stroke="#a2a2a2" stroke-width="1.700"><path d="M2.200 2.300 L7 8 L11.800 2.300"/></svg>
<span class="t" style="left:1127.00px;top:1192px;font:700 22.1px/25px 'Liberation Sans',sans-serif;color:#000;transform:scaleX(0.9505);">Customer</span>
<div style="left:1232.3px;top:1240.6px;width:319.3px;height:44.6px;background:#f0f0f0;border:1.6px solid #d6d6d6;box-sizing:border-box"></div>
<svg class="a" style="left:1525.1px;top:1256.1px" width="14" height="12" viewBox="0 0 14 12" fill="none" stroke="#a2a2a2" stroke-width="1.700"><path d="M2.200 2.300 L7 8 L11.800 2.300"/></svg>
<span class="t" style="left:1091.00px;top:1252px;font:700 22.1px/25px 'Liberation Sans',sans-serif;color:#000;transform:scaleX(0.9740);">Cooling Type</span>
<div style="left:1232.3px;top:1300.6px;width:319.3px;height:44.6px;background:#f0f0f0;border:1.6px solid #d6d6d6;box-sizing:border-box"></div>
<svg class="a" style="left:1525.1px;top:1316.1px" width="14" height="12" viewBox="0 0 14 12" fill="none" stroke="#a2a2a2" stroke-width="1.700"><path d="M2.200 2.300 L7 8 L11.800 2.300"/></svg>
<span class="t" style="left:1121.56px;top:1312px;font:700 22.1px/25px 'Liberation Sans',sans-serif;color:#000;transform:scaleX(0.9364);">End Buyer</span>
<div style="left:1232.3px;top:1360.5px;width:319.3px;height:44.6px;background:#f0f0f0;border:1.6px solid #d6d6d6;box-sizing:border-box"></div>
<svg class="a" style="left:1525.1px;top:1376px" width="14" height="12" viewBox="0 0 14 12" fill="none" stroke="#a2a2a2" stroke-width="1.700"><path d="M2.200 2.300 L7 8 L11.800 2.300"/></svg>
<span class="t" style="left:1151.50px;top:1372px;font:700 22.1px/25px 'Liberation Sans',sans-serif;color:#000;transform:scaleX(0.9505);">Gender</span>
<div style="left:1232.3px;top:1420.5px;width:319.3px;height:44.6px;background:#fff;border:1.6px solid #c3c3c3;box-sizing:border-box"></div>
<span class="t" style="left:1176.52px;top:1432px;font:700 22.1px/25px 'Liberation Sans',sans-serif;color:#000;transform:scaleX(0.9764);">PO #</span>
<div style="left:652.7px;top:1474.8px;width:898.9px;height:178px;background:#fff;border:1.6px solid #bdbdbd;box-sizing:border-box"></div>
<span class="t" style="left:531.80px;top:1487px;font:700 22.1px/25px 'Liberation Sans',sans-serif;color:#7a7a7a;transform:scaleX(0.9747);">Comments</span>
</section>
</main>
<footer>
<div style="left:2431.7px;top:1573px;width:580.2px;height:130px;background:#e4e5e6;box-shadow:0 0 7px 1px rgba(0,0,0,.55)"></div>
<div style="left:2431.7px;top:1573px;width:79.9px;height:130px;background:#285d93"></div>
<svg class="a" style="left:2449px;top:1638px" width="46" height="46" viewBox="0 0 46 46" fill="none" stroke="#fff"><circle cx="22.500" cy="23" r="18.300" stroke-width="3"/><path d="M22.500 20 V33" stroke-width="4"/><circle cx="22.500" cy="13.800" r="2.500" fill="#fff" stroke="none"/></svg>
<span class="t" style="left:2521.47px;top:1627px;font:700 26.6px/30px 'Liberation Sans',sans-serif;color:#262c33;transform:scaleX(1.0314);white-space:pre;">Cannot Produce Constraint:  I...</span>
<svg class="a" style="left:2966px;top:1581px" width="40" height="38" viewBox="0 0 40 38" fill="none" stroke="#a3a3a3" stroke-width="6.500"><path d="M5.800 5.500 L33.200 32.500 M33.200 5.500 L5.800 32.500"/></svg>
</footer>
</div>
</body></html>
